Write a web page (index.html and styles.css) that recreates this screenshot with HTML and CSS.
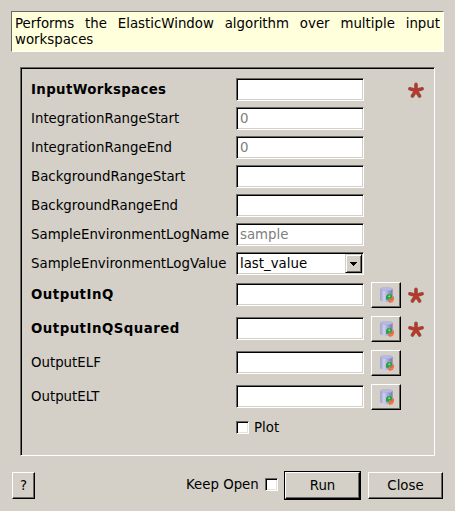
FILE: index.html
```html
<!DOCTYPE html>
<html lang="en">
<head>
<meta charset="utf-8">
<title>ElasticWindow</title>
<link rel="stylesheet" href="styles.css">
</head>
<body>
<svg width="0" height="0" class="defs">
  <defs>
    <linearGradient id="cyl" x1="0" x2="1" y1="0" y2="0">
      <stop offset="0" stop-color="#9a9bc8"/><stop offset=".3" stop-color="#cfd0f0"/><stop offset=".6" stop-color="#a5a7da"/><stop offset="1" stop-color="#7779ac"/>
    </linearGradient>
    <symbol id="store" viewBox="0 0 15 16">
      <path d="M.2 2v10.8c0 2.7 12.4 2.7 12.4 0V2z" fill="url(#cyl)"/>
      <ellipse cx="6.4" cy="2" rx="6.2" ry="1.6" fill="#b9bae2" stroke="#a8a9d5" stroke-width=".5"/>
      <path d="M6 12.6V9.3L7.6 7.2h3.4l1 1.4-.5 2.4-2.4.4-.8 1.8z" fill="#28a23c"/>
      <path d="M7.8 9.6l1.6-1.4 1 .9-.9 1.1z" fill="#8cf276"/>
      <path d="M13.8 8.8v4.2l-1.5 2.3-3 .4-1-1.6 1.4-1.8 1.8-.5z" fill="#f0602f"/>
      <path d="M9.6 13.8l1.7.3 1.6-1.3" fill="none" stroke="#ff9a68" stroke-width=".8"/>
    </symbol>
    <symbol id="star" viewBox="0 0 18 17">
      <g fill="none" stroke-linecap="round">
        <path d="M9 8.6V2.4M9 8.6L2.9 6.8M9 8.6l6.1-1.8M9 8.6l-3.6 5.4M9 8.6l3.6 5.4" stroke="#895b50" stroke-width="3.7"/>
        <path d="M9 8.6V2.4M9 8.6L2.9 6.8M9 8.6l6.1-1.8M9 8.6l-3.6 5.4M9 8.6l3.6 5.4" stroke="#bd3527" stroke-width="2.3"/>
      </g>
    </symbol>
  </defs>
</svg>
<div class="dialog">
  <p class="message">Performs the ElasticWindow algorithm over multiple input workspaces</p>
  <main class="panel">
    <div class="row"><label class="required">InputWorkspaces</label><div class="field"></div><svg class="star far"><use href="#star"/></svg></div>
    <div class="row"><label>IntegrationRangeStart</label><div class="field hint">0</div></div>
    <div class="row"><label>IntegrationRangeEnd</label><div class="field hint">0</div></div>
    <div class="row"><label>BackgroundRangeStart</label><div class="field"></div></div>
    <div class="row"><label>BackgroundRangeEnd</label><div class="field"></div></div>
    <div class="row"><label>SampleEnvironmentLogName</label><div class="field hint">sample</div></div>
    <div class="row"><label>SampleEnvironmentLogValue</label><div class="field combo"><span>last_value</span><div class="arrow"><svg width="7" height="4" shape-rendering="crispEdges"><path d="M0 0h7v1H6v1H5v1H4v1H3V3H2V2H1V1H0z"/></svg></div></div></div>
    <div class="outputs">
      <div class="row out"><label class="required">OutputInQ</label><div class="field"></div><div class="button tool"><svg class="store"><use href="#store"/></svg></div><svg class="star"><use href="#star"/></svg></div>
      <div class="row out"><label class="required">OutputInQSquared</label><div class="field"></div><div class="button tool"><svg class="store"><use href="#store"/></svg></div><svg class="star"><use href="#star"/></svg></div>
      <div class="row out"><label>OutputELF</label><div class="field"></div><div class="button tool"><svg class="store"><use href="#store"/></svg></div></div>
      <div class="row out"><label>OutputELT</label><div class="field"></div><div class="button tool"><svg class="store"><use href="#store"/></svg></div></div>
    </div>
    <div class="plot"><span class="check"></span><span>Plot</span></div>
  </main>
  <footer class="footer">
    <div class="button help">?</div>
    <span class="keep">Keep Open</span><span class="check"></span>
    <div class="default"><div class="button run">Run</div></div>
    <div class="button close">Close</div>
  </footer>
</div>
</body>
</html>
```
FILE: styles.css
```css
* { box-sizing: border-box; }
body {
  margin: 0;
  background: #d4d0c8;
  color: #000;
  font: 13.33px/16px "DejaVu Sans", sans-serif;
}
.defs { display: block; }
.dialog { height: 511px; padding: 11px 11px 0; overflow: hidden; }
.message {
  width: 433px;
  height: 41px;
  margin: 0;
  padding: 4px 3px 0;
  background: #ffffdc;
  border: 1px solid;
  border-color: #6a6862 #fff #fff #6a6862;
  text-align: justify;
}
.panel {
  width: 415px;
  height: 389px;
  margin: 15px 0 0 9px;
  padding: 10px 0 0 10px;
  border: 1px solid;
  border-color: #6a6862 #fff #fff #6a6862;
  box-shadow: inset 1px 1px #000;
}
.row { display: flex; align-items: center; height: 23px; margin-bottom: 6px; }
.row label { width: 205px; white-space: nowrap; }
.row .required { font-weight: bold; letter-spacing: .36px; }
.field {
  width: 128px;
  height: 23px;
  padding: 3px 3px 0;
  background: #fff;
  border: 1px solid;
  border-color: #6a6862 #fff #fff #6a6862;
  box-shadow: inset 1px 1px #000, inset -1px -1px #d4d0c8;
}
.hint { color: #808080; }
.combo { display: flex; justify-content: space-between; padding: 1px 1px 1px 3px; }
.combo span { padding-top: 2px; }
.arrow {
  display: flex;
  align-items: center;
  justify-content: center;
  width: 17px;
  height: 19px;
  padding-right: 1px;
  background: #d4d0c8;
  border: 1px solid;
  border-color: #d4d0c8 #000 #000 #d4d0c8;
  box-shadow: inset 1px 1px #fff, inset -1px -1px #6a6862;
}
.outputs { padding-top: 1px; }
.out { height: 26px; margin-bottom: 8px; }
.out .field { margin-bottom: 1px; }
.out label { padding-bottom: 1px; }
.out .required { letter-spacing: .48px; }
.button {
  display: flex;
  align-items: center;
  justify-content: center;
  background: #d4d0c8;
  border: 1px solid;
  border-color: #fff #000 #000 #fff;
  box-shadow: inset -1px -1px #6a6862;
}
.tool { width: 30px; height: 26px; margin-left: 7px; }
.store { width: 15px; height: 16px; margin: 0 0 0 3px; }
.star { width: 18px; height: 17px; margin: 1px 0 0 6px; }
.far { margin-left: 43px; }
.plot { display: flex; align-items: center; gap: 5px; height: 13px; margin: 11px 0 0 205px; }
.outputs .out:last-child { margin-bottom: 0; }
.check {
  width: 13px;
  height: 13px;
  background: #fff;
  border: 1px solid;
  border-color: #6a6862 #fff #fff #6a6862;
  box-shadow: inset 1px 1px #000, inset -1px -1px #e6e3de;
}
.footer { display: flex; align-items: center; height: 29px; margin: 15px 0 0 1px; }
.help { width: 23px; height: 27px; }
.keep { width: 79px; margin: 0 0 2px 151px; white-space: nowrap; }
.footer .check { margin-bottom: 2px; }
.default { width: 77px; height: 29px; margin-left: 6px; border: 1px solid #000; }
.run { height: 27px; }
.close { width: 75px; height: 27px; margin-left: 7px; }
```
